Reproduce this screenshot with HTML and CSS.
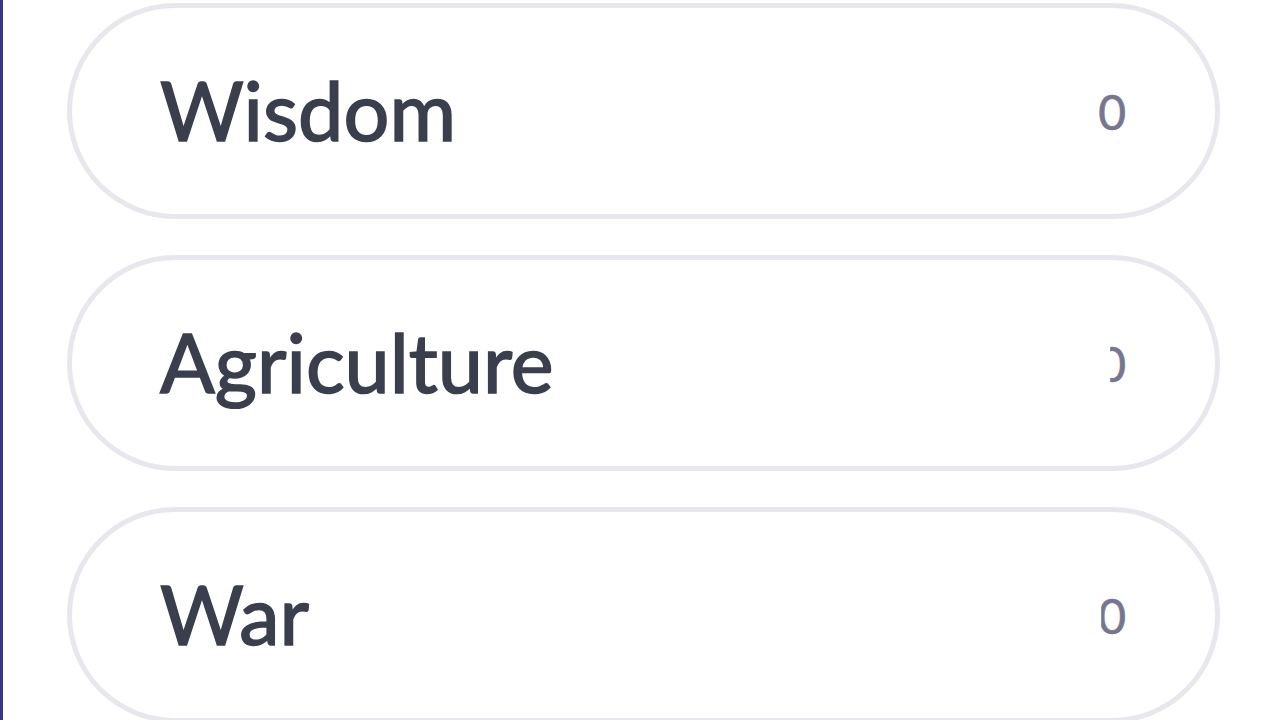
FILE: index.html
```html
<!DOCTYPE html>
<html>
<head>
<meta charset="utf-8">
<link rel="stylesheet" href="styles.css">
</head>
<body>
<div class="panel">
  <ul class="list">
    <li class="item"><span class="name">Wisdom</span><span class="count">0</span></li>
    <li class="item"><span class="name">Agriculture</span><span class="count count-half">0</span></li>
    <li class="item"><span class="name">War</span><span class="count count-part">0</span></li>
  </ul>
</div>
</body>
</html>
```
FILE: styles.css
```css
html, body {
  margin: 0;
  padding: 0;
  background: #ffffff;
  height: 100%;
  overflow: hidden;
}
.panel {
  height: 100%;
  border-left: 3px solid #35358a;
  box-sizing: border-box;
  padding: 3px 60px 0 64px;
}
.list {
  list-style: none;
  margin: 0;
  padding: 0;
  display: flex;
  flex-direction: column;
  gap: 36px;
}
.item {
  height: 216px;
  box-sizing: border-box;
  border: 5px solid #e7e7ed;
  border-radius: 108px;
  display: flex;
  align-items: center;
  justify-content: space-between;
  padding: 0 89px 0 88px;
  font-family: "Lato", "Liberation Sans", sans-serif;
}
.name {
  font-size: 81px;
  font-weight: 400;
  color: #3b3e4d;
  -webkit-text-stroke: 1.6px #3b3e4d;
  position: relative;
  top: -2px;
}
.count {
  font-size: 48px;
  color: #77768f;
  font-weight: 400;
  -webkit-text-stroke: 0.6px #77768f;
}
.count-half {
  clip-path: inset(0 0 0 12px);
}
.count-part {
  clip-path: inset(0 0 0 3px);
}
```
